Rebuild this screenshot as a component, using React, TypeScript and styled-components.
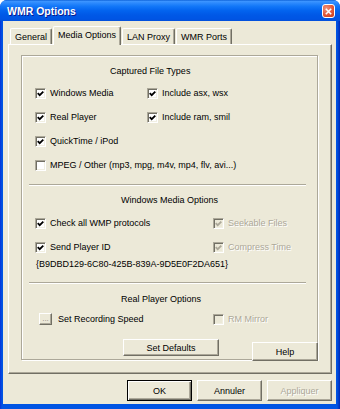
import * as React from 'react';
import styled, { createGlobalStyle, css } from 'styled-components';

const GlobalStyle = createGlobalStyle`
	html, body {
		margin: 0;
		padding: 0;
		background: #fff;
	}
	body {
		font-family: "Liberation Sans", Arial, sans-serif;
		font-size: 9px;
		color: #000;
	}
	* {
		box-sizing: border-box;
	}
`;

const Window = styled.div`
	background: linear-gradient(to right, #0831d9, #0054e3 2px, #0054e3 calc(100% - 3px), #0028b4);
	border-radius: 7px 7px 0 0;
	display: flex;
	flex-direction: column;
	height: 409px;
	overflow: hidden;
	width: 340px;
`;

const TitleBar = styled.div`
	align-items: center;
	background: linear-gradient(
		to bottom,
		#0a5fd6 0%,
		#3d95ff 6%,
		#2a88fc 16%,
		#1277f8 30%,
		#0364ef 50%,
		#0058e6 72%,
		#0055e4 88%,
		#0250dc 100%
	);
	display: flex;
	flex-shrink: 0;
	height: 21px;
	padding: 0 5px 0 7px;
`;

const Title = styled.span`
	color: #fff;
	flex: 1;
	font-size: 10.5px;
	font-weight: 700;
	padding-top: 1px;
	text-shadow: 1px 1px 0 #0a1a8c;
`;

const CloseButton = styled.div`
	align-items: center;
	background: radial-gradient(circle at 30% 30%, #f0927a, #e2583a 55%, #c13a16);
	border: 1px solid #fff;
	border-radius: 3px;
	display: flex;
	height: 14px;
	justify-content: center;
	margin-top: 1px;
	width: 13px;
`;

const Frame = styled.div`
	background: #ece9d8;
	display: flex;
	flex: 1;
	flex-direction: column;
	margin: 0 4px 5px 3px;
	padding: 5px 0 3px;
`;

const TabStrip = styled.div`
	align-items: flex-end;
	display: flex;
	gap: 1px;
	height: 18px;
	padding-left: 7px;
`;

const Tab = styled.div<{ $active?: boolean }>`
	align-items: center;
	border: 1px solid #fff;
	border-bottom: none;
	border-radius: 2px 2px 0 0;
	border-right-color: #716f64;
	box-shadow: inset -1px 0 0 #aca899;
	display: flex;
	height: 16px;
	padding: 0 4px;
	white-space: nowrap;
	${(p) =>
		p.$active &&
		css`
			background: #ece9d8;
			height: 19px;
			margin-bottom: -1px;
			padding-bottom: 2px;
			position: relative;
			z-index: 1;
		`}
`;

const Panel = styled.div`
	border: 1px solid #fff;
	border-bottom-color: #716f64;
	border-right-color: #716f64;
	box-shadow: inset -1px -1px 0 #aca899;
	height: 330px;
	margin: 0 4px 0 5px;
	padding: 10px 13px 13px 12px;
`;

const Group = styled.div`
	border: 1px solid #aca899;
	box-shadow:
		inset 1px 1px 0 #fff,
		1px 1px 0 #fff;
	display: flex;
	flex-direction: column;
	height: 100%;
	padding-top: 4px;
	position: relative;
`;

const SectionTitle = styled.div<{ $indent: number; $gap?: number }>`
	align-items: center;
	display: flex;
	height: 21px;
	margin-bottom: ${(p) => p.$gap ?? 0}px;
	padding-left: ${(p) => p.$indent}px;
`;

const OptionRow = styled.div<{ $split: number; $h?: number; $pad?: number }>`
	align-items: center;
	display: grid;
	grid-template-columns: ${(p) => p.$split}px 1fr;
	height: ${(p) => p.$h ?? 24}px;
	padding-left: ${(p) => p.$pad ?? 13}px;
`;

const Separator = styled.div<{ $top: number; $bottom: number }>`
	border-bottom: 1px solid #fff;
	border-top: 1px solid #aca899;
	height: 2px;
	margin: ${(p) => p.$top}px 11px ${(p) => p.$bottom}px 7px;
`;

const CheckLabel = styled.label<{ $disabled?: boolean }>`
	align-items: center;
	display: flex;
	gap: 4px;
	white-space: nowrap;
	${(p) =>
		p.$disabled &&
		css`
			color: #aca899;
			text-shadow: 1px 1px 0 #fff;
		`}
`;

const Box = styled.span<{ $disabled?: boolean }>`
	align-items: center;
	background: ${(p) => (p.$disabled ? '#ece9d8' : '#fff')};
	border: 1px solid;
	border-color: #aca899 #fff #fff #aca899;
	box-shadow:
		inset 1px 1px 0 #716f64,
		inset -1px -1px 0 #f1efe2;
	display: flex;
	flex-shrink: 0;
	height: 11px;
	justify-content: center;
	width: 11px;
`;

const Guid = styled.div`
	align-items: center;
	display: flex;
	height: 10px;
	padding-left: 14px;
	white-space: nowrap;
`;

const SpeedRow = styled.div`
	align-items: center;
	display: flex;
	gap: 6px;
`;

const raised = css`
	background: #ece9d8;
	border: 1px solid;
	border-color: #fff #716f64 #716f64 #fff;
	box-shadow: inset -1px -1px 0 #aca899;
	color: #000;
	font: inherit;
	padding: 0;
`;

const DotsButton = styled.div`
	${raised};
	align-items: flex-end;
	color: #8a887c;
	display: flex;
	font-size: 8px;
	height: 12px;
	justify-content: center;
	line-height: 8px;
	padding-bottom: 1px;
	width: 13px;
`;

const PushButton = styled.button<{ $default?: boolean; $disabled?: boolean }>`
	${raised};
	height: 21px;
	width: 65px;
	${(p) =>
		p.$default &&
		css`
			border-color: #000;
			box-shadow:
				inset 1px 1px 0 #fff,
				inset -1px -1px 0 #716f64,
				inset -2px -2px 0 #aca899;
		`}
	${(p) =>
		p.$disabled &&
		css`
			color: #aca899;
			text-shadow: 1px 1px 0 #fff;
		`}
`;

const DefaultsButton = styled.button`
	${raised};
	height: 17px;
	margin: 10px 0 0 101px;
	width: 96px;
`;

const HelpButton = styled.button`
	${raised};
	bottom: -2px;
	height: 19px;
	position: absolute;
	right: -1px;
	width: 66px;
`;

const ButtonRow = styled.div`
	display: flex;
	gap: 5px;
	justify-content: flex-end;
	margin-top: 6px;
	padding-right: 4px;
`;

function CheckMark({ disabled }: { disabled?: boolean }) {
	return (
		<svg width="7" height="7" viewBox="0 0 7 7">
			<path
				d="M0.7 3.2 L2.7 5.2 L6.3 1.6"
				fill="none"
				stroke={disabled ? '#aca899' : '#000'}
				strokeWidth="1.8"
			/>
		</svg>
	);
}

function Check(props: { label: string; checked?: boolean; disabled?: boolean }) {
	return (
		<CheckLabel $disabled={props.disabled}>
			<Box $disabled={props.disabled}>
				{props.checked && <CheckMark disabled={props.disabled} />}
			</Box>
			{props.label}
		</CheckLabel>
	);
}

export default function App() {
	return (
		<>
			<GlobalStyle />
			<Window>
				<TitleBar>
					<Title>WMR Options</Title>
					<CloseButton>
						<svg width="7" height="7" viewBox="0 0 7 7">
							<path d="M0.8 0.8 L6.2 6.2 M6.2 0.8 L0.8 6.2" stroke="#fff" strokeWidth="1.6" />
						</svg>
					</CloseButton>
				</TitleBar>
				<Frame>
					<TabStrip>
						<Tab>General</Tab>
						<Tab $active>Media Options</Tab>
						<Tab>LAN Proxy</Tab>
						<Tab>WMR Ports</Tab>
					</TabStrip>
					<Panel>
						<Group>
							<SectionTitle $indent={88}>Captured File Types</SectionTitle>
							<OptionRow $split={112}>
								<Check label="Windows Media" checked />
								<Check label="Include asx, wsx" checked />
							</OptionRow>
							<OptionRow $split={112}>
								<Check label="Real Player" checked />
								<Check label="Include ram, smil" checked />
							</OptionRow>
							<OptionRow $split={112}>
								<Check label="QuickTime / iPod" checked />
							</OptionRow>
							<OptionRow $split={112}>
								<Check label="MPEG / Other (mp3, mpg, m4v, mp4, flv, avi...)" />
							</OptionRow>
							<Separator $top={7} $bottom={3} />
							<SectionTitle $indent={99} $gap={1}>
								Windows Media Options
							</SectionTitle>
							<OptionRow $split={178}>
								<Check label="Check all WMP protocols" checked />
								<Check label="Seekable Files" checked disabled />
							</OptionRow>
							<OptionRow $split={178}>
								<Check label="Send Player ID" checked />
								<Check label="Compress Time" checked disabled />
							</OptionRow>
							<Guid>{'{B9DBD129-6C80-425B-839A-9D5E0F2DA651}'}</Guid>
							<Separator $top={13} $bottom={4} />
							<SectionTitle $indent={99}>Real Player Options</SectionTitle>
							<OptionRow $split={174} $h={20} $pad={17}>
								<SpeedRow>
									<DotsButton>...</DotsButton>
									Set Recording Speed
								</SpeedRow>
								<Check label="RM Mirror" disabled />
							</OptionRow>
							<DefaultsButton>Set Defaults</DefaultsButton>
							<HelpButton>Help</HelpButton>
						</Group>
					</Panel>
					<ButtonRow>
						<PushButton $default>OK</PushButton>
						<PushButton>Annuler</PushButton>
						<PushButton $disabled>Appliquer</PushButton>
					</ButtonRow>
				</Frame>
			</Window>
		</>
	);
}
